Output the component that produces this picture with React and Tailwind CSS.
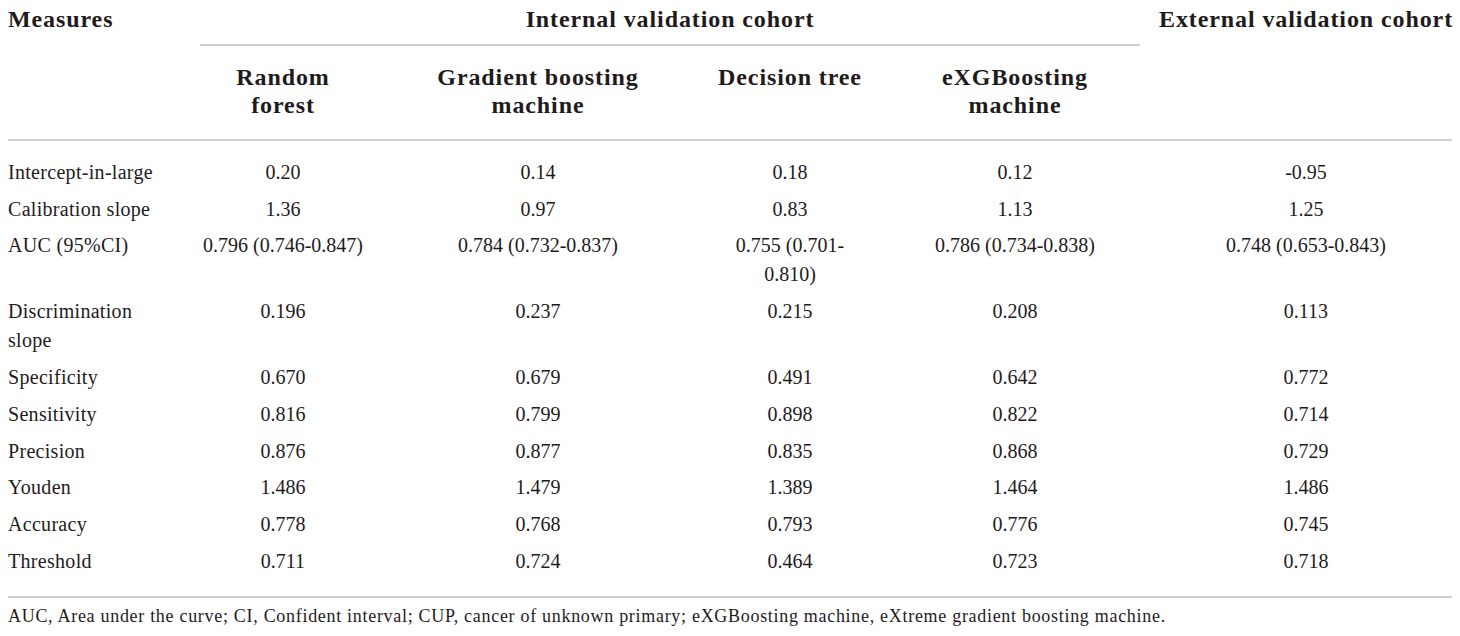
import React from "react";

const rows = [
  [["Intercept-in-large"], ["0.20"], ["0.14"], ["0.18"], ["0.12"], ["-0.95"]],
  [["Calibration slope"], ["1.36"], ["0.97"], ["0.83"], ["1.13"], ["1.25"]],
  [["AUC (95%CI)"], ["0.796 (0.746-0.847)"], ["0.784 (0.732-0.837)"], ["0.755 (0.701-", "0.810)"], ["0.786 (0.734-0.838)"], ["0.748 (0.653-0.843)"]],
  [["Discrimination", "slope"], ["0.196"], ["0.237"], ["0.215"], ["0.208"], ["0.113"]],
  [["Specificity"], ["0.670"], ["0.679"], ["0.491"], ["0.642"], ["0.772"]],
  [["Sensitivity"], ["0.816"], ["0.799"], ["0.898"], ["0.822"], ["0.714"]],
  [["Precision"], ["0.876"], ["0.877"], ["0.835"], ["0.868"], ["0.729"]],
  [["Youden"], ["1.486"], ["1.479"], ["1.389"], ["1.464"], ["1.486"]],
  [["Accuracy"], ["0.778"], ["0.768"], ["0.793"], ["0.776"], ["0.745"]],
  [["Threshold"], ["0.711"], ["0.724"], ["0.464"], ["0.723"], ["0.718"]],
];

const headers2 = [
  ["Random", "forest"],
  ["Gradient boosting", "machine"],
  ["Decision tree"],
  ["eXGBoosting", "machine"],
];

function Lines({ lines }) {
  return (
    <span>
      {lines.map((l, i) => (
        <React.Fragment key={i}>
          {i > 0 && <br />}
          {l}
        </React.Fragment>
      ))}
    </span>
  );
}

export default function App() {
  return (
    <div
      className="w-[1460px] h-[636px] bg-white text-[#1f1b1c] pl-[8px] overflow-hidden"
      style={{ fontFamily: '"Liberation Serif", "Times New Roman", serif' }}
    >
      <div className="w-[1444px]">
        {/* Header */}
        <div className="grid grid-cols-[192px_166px_344px_160px_290px_292px] font-bold text-[24px] leading-[28px] tracking-[0.9px]">
          <div className="h-[46px] pt-[5px] whitespace-nowrap">Measures</div>
          <div className="col-span-4 mr-[20px] h-[46px] pt-[5px] border-b-2 border-[#d0d0d0] flex justify-center whitespace-nowrap">
            Internal validation cohort
          </div>
          <div className="h-[46px] pt-[5px] flex justify-center whitespace-nowrap">
            External validation cohort
          </div>
          <div className="pt-[17px] pb-[20px]" />
          {headers2.map((h, i) => (
            <div key={i} className="pt-[17px] pb-[20px] flex justify-center text-center whitespace-nowrap">
              <Lines lines={h} />
            </div>
          ))}
          <div className="pt-[17px] pb-[20px]" />
        </div>
        <div className="h-[2px] bg-[#d0d0d0]" />

        {/* Body */}
        <div className="pt-[13px] pb-[16px] text-[20px] leading-[29px]">
          {rows.map((r, ri) => (
            <div key={ri} className="grid grid-cols-[192px_166px_344px_160px_290px_292px]">
              {r.map((c, ci) =>
                ci === 0 ? (
                  <div key={ci} className="py-[3.9px] whitespace-nowrap tracking-[0.3px]">
                    <Lines lines={c} />
                  </div>
                ) : (
                  <div key={ci} className="py-[3.9px] flex justify-center text-center whitespace-nowrap">
                    <Lines lines={c} />
                  </div>
                )
              )}
            </div>
          ))}
        </div>
        <div className="h-[2px] bg-[#d0d0d0]" />

        {/* Footnote */}
        <div className="mt-[6px] text-[18px] leading-[24px] tracking-[0.7px] whitespace-nowrap">
          AUC, Area under the curve; CI, Confident interval; CUP, cancer of unknown primary; eXGBoosting machine, eXtreme gradient boosting machine.
        </div>
      </div>
    </div>
  );
}
